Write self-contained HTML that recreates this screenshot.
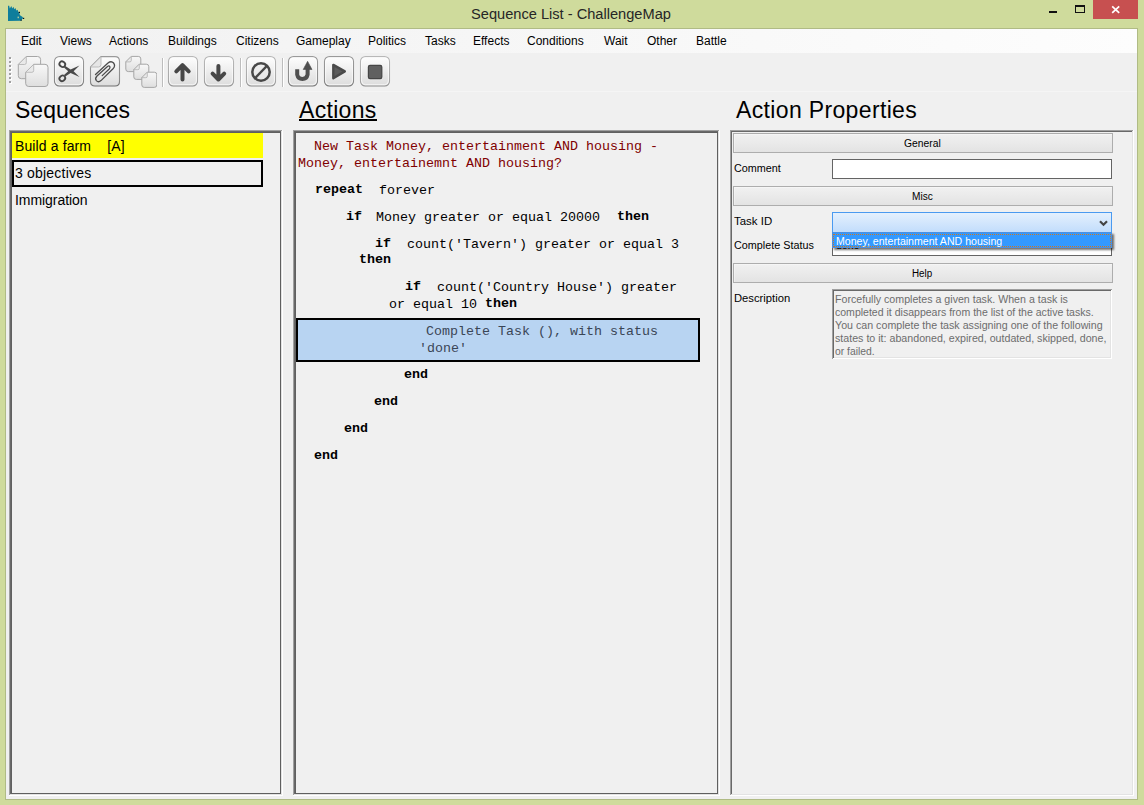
<!DOCTYPE html>
<html>
<head>
<meta charset="utf-8">
<title>Sequence List - ChallengeMap</title>
<style>
*{box-sizing:border-box;margin:0;padding:0}
html,body{width:1144px;height:805px;overflow:hidden}
body{background:#cfdb9c;font-family:"Liberation Sans",sans-serif;position:relative;color:#000}
.abs{position:absolute}
#frame{position:absolute;left:5px;top:28px;width:1133px;height:772px;background:#b0bb85}
#client{position:absolute;left:6px;top:29px;width:1131px;height:770px;background:#f0f0f0}
#title{position:absolute;left:0;top:0;width:1144px;height:28px}
#title .txt{position:absolute;left:471px;top:4px;font-size:15.4px;line-height:20px;transform-origin:0 0;transform:scaleX(.95);color:#262626;white-space:nowrap}
#close{position:absolute;left:1093px;top:0;width:45px;height:19px;background:#c75050}
#menubar{position:absolute;left:6px;top:29px;width:1131px;height:24px;background:linear-gradient(90deg,#f1f1f1 0%,#fdfdfd 100%)}
#menubar span{position:absolute;top:5px;font-size:12px;line-height:15px;white-space:nowrap;color:#000}
#toolbar{position:absolute;left:7px;top:53px;width:1129px;height:38px;background:#f0f0f0}
.h{position:absolute;font-size:23px;line-height:28px;white-space:nowrap;color:#000}

.mono{font-family:"Liberation Mono",monospace;font-size:13.33px;line-height:17px;white-space:pre;position:absolute;color:#000}
.mono b{font-weight:bold;position:relative;top:-1px}
.red{color:#800000}
.seq{position:absolute;font-size:14px;line-height:16px;white-space:pre;left:15px}
.p{position:absolute;margin-top:-1px;font-size:11.7px;line-height:13px;white-space:nowrap;transform-origin:0 0}
.btn{position:absolute;left:733px;width:380px;height:20px;border:1px solid #adadad;background:linear-gradient(#f1f1f1,#e3e3e3);box-shadow:inset 1px 1px 0 rgba(255,255,255,.35)}
.btn span{position:absolute;top:2px;font-size:11.7px;line-height:13px;white-space:nowrap;transform-origin:0 0}
.ln{position:absolute}
.d{color:#6d6d6d}
</style>
</head>
<body>
<div id="title">
  <svg class="abs" style="left:8px;top:5px" width="17" height="17" viewBox="0 0 17 17"><path d="M0 0.8 L1.2 0.8 L1.8 3.6 L3.3 1 L4.3 3.4 L5.4 1.8 L6.4 4.2 L7.5 2.9 L8.3 5.5 L9.6 4.7 L10.4 7 L11.6 7.6 L11.5 9 L12 10.3 L14.6 12 L15.2 13.6 L14 14 L13.6 15.8 L0 16 Z" fill="#0e7e9c"/><rect x="10.8" y="6.8" width="1.2" height="1.2" fill="#111"/><rect x="15" y="12.8" width="1.2" height="1.2" fill="#111"/><rect x="12.6" y="14.6" width="1" height="1.2" fill="#111"/><rect x="9.6" y="11.6" width="1.2" height="1.6" fill="#cfd89a"/></svg>
  <div class="txt">Sequence List - ChallengeMap</div>
  <div class="abs" style="left:1049px;top:11px;width:8px;height:2px;background:#111"></div>
  <div class="abs" style="left:1075px;top:5px;width:10px;height:8px;border:1px solid #111;border-top-width:2px"></div>
  <div id="close"><svg class="abs" style="left:18px;top:5px" width="10" height="9" viewBox="0 0 10 9"><path d="M1.2 1.3 L8.2 7.9 M8.2 1.3 L1.2 7.9" stroke="#fff" stroke-width="1.7" fill="none"/></svg></div>
</div>
<div id="frame"></div>
<div id="client"></div>
<div id="menubar">
  <span style="left:15px">Edit</span>
  <span style="left:54px">Views</span>
  <span style="left:103px">Actions</span>
  <span style="left:162px">Buildings</span>
  <span style="left:230px">Citizens</span>
  <span style="left:290px">Gameplay</span>
  <span style="left:362px">Politics</span>
  <span style="left:419px">Tasks</span>
  <span style="left:467px">Effects</span>
  <span style="left:521px">Conditions</span>
  <span style="left:598px">Wait</span>
  <span style="left:641px">Other</span>
  <span style="left:690px">Battle</span>
</div>
<div id="toolbar"></div><div class="ln" style="left:6px;top:91px;width:1131px;height:1px;background:#f5f5f5"></div>
<svg width="0" height="0" style="position:absolute"><defs>
<linearGradient id="bg" x1="0" y1="0" x2="0" y2="1"><stop offset="0" stop-color="#fefefe"/><stop offset="1" stop-color="#dcdcdc"/></linearGradient>
<linearGradient id="bs" x1="0" y1="0" x2="0" y2="1"><stop offset="0" stop-color="#b8b8b8"/><stop offset=".8" stop-color="#a8a8a8"/><stop offset="1" stop-color="#8a8a8a"/></linearGradient>
<linearGradient id="bs2" x1="0" y1="0" x2="0" y2="1"><stop offset="0" stop-color="#9a9a9a"/><stop offset=".8" stop-color="#8c8c8c"/><stop offset="1" stop-color="#6e6e6e"/></linearGradient>
<linearGradient id="pg" x1="0" y1="0" x2="0" y2="1"><stop offset="0" stop-color="#f8f8f8"/><stop offset="1" stop-color="#dedede"/></linearGradient>
</defs></svg><div class="ln" style="left:10px;top:58px;width:2px;height:2px;background:#fff"></div><div class="ln" style="left:9px;top:57px;width:2px;height:2px;background:#a0a0a0"></div><div class="ln" style="left:10px;top:62px;width:2px;height:2px;background:#fff"></div><div class="ln" style="left:9px;top:61px;width:2px;height:2px;background:#a0a0a0"></div><div class="ln" style="left:10px;top:66px;width:2px;height:2px;background:#fff"></div><div class="ln" style="left:9px;top:65px;width:2px;height:2px;background:#a0a0a0"></div><div class="ln" style="left:10px;top:70px;width:2px;height:2px;background:#fff"></div><div class="ln" style="left:9px;top:69px;width:2px;height:2px;background:#a0a0a0"></div><div class="ln" style="left:10px;top:74px;width:2px;height:2px;background:#fff"></div><div class="ln" style="left:9px;top:73px;width:2px;height:2px;background:#a0a0a0"></div><div class="ln" style="left:10px;top:78px;width:2px;height:2px;background:#fff"></div><div class="ln" style="left:9px;top:77px;width:2px;height:2px;background:#a0a0a0"></div><div class="ln" style="left:10px;top:82px;width:2px;height:2px;background:#fff"></div><div class="ln" style="left:9px;top:81px;width:2px;height:2px;background:#a0a0a0"></div><svg class="ln" style="left:17px;top:55px" width="32" height="33" viewBox="0 0 32 33"><path d="M9.3 1.5 H20.6 Q23.6 1.5 23.6 4.5 V20.7 Q23.6 23.7 20.6 23.7 H4.3 Q1.3 23.7 1.3 20.7 V9.5 Z" fill="url(#pg)" stroke="#a6a6a6" stroke-width="1"/><path d="M9.3 1.5 V7.7 Q9.3 9.5 7.500000000000001 9.5 H1.3 Z" fill="#e9e9e9" stroke="#b0b0b0" stroke-width=".8"/><path d="M16.7 9.3 H28.0 Q31.0 9.3 31.0 12.3 V28.5 Q31.0 31.5 28.0 31.5 H11.7 Q8.7 31.5 8.7 28.5 V17.3 Z" fill="url(#pg)" stroke="#a6a6a6" stroke-width="1"/><path d="M16.7 9.3 V15.5 Q16.7 17.3 14.899999999999999 17.3 H8.7 Z" fill="#e9e9e9" stroke="#b0b0b0" stroke-width=".8"/></svg>
<svg class="ln" style="left:53px;top:55px" width="32" height="33" viewBox="0 0 32 33"><rect x="1.5" y="1.6" width="29" height="29.4" rx="4.8" fill="url(#bg)" stroke="url(#bs2)" stroke-width="1.1"/><rect x="2.6" y="2.7" width="26.8" height="27" rx="3.8" fill="none" stroke="#fff" stroke-opacity=".7" stroke-width="1"/><g fill="none" stroke="#474747" stroke-width="1.8"><ellipse cx="9.3" cy="9.2" rx="3" ry="2.6" transform="rotate(35 9.3 9.2)"/><ellipse cx="9.3" cy="23.3" rx="3" ry="2.6" transform="rotate(-35 9.3 23.3)"/></g><path d="M12.3 11 L17.6 14.5 L26.5 10.4 L20.6 16.25 L26.5 21.9 L17.6 18 L12.3 21.5 L11 20 L15.2 16.25 L11 12.6 Z" fill="#4a4a4a"/></svg>
<svg class="ln" style="left:89px;top:55px" width="32" height="33" viewBox="0 0 32 33"><path d="M12 1.6 H26 Q30.5 1.6 30.5 6.2 V26.5 Q30.5 31 26 31 H6 Q1.5 31 1.5 26.5 V12 Z" fill="url(#bg)" stroke="url(#bs2)" stroke-width="1.1"/><path d="M12 1.6 V9.5 Q12 12 9.5 12 H1.5 Z" fill="#e6e6e6" stroke="#b0b0b0" stroke-width=".8"/><path d="M6.5 19.5 L19 8 Q22.2 5.4 24.6 8 Q26.8 10.8 24 13.8 L12 25.6 Q9.4 27.8 7.4 25.6 Q5.6 23.4 8 21 L18.5 11.5 Q20 10.4 20.8 11.6 Q21.4 12.8 20.2 14 L13.2 20.6" fill="none" stroke="#4c4c4c" stroke-width="1.3" stroke-linecap="round"/></svg>
<svg class="ln" style="left:125px;top:55px" width="32" height="33" viewBox="0 0 32 33"><path d="M6.3 1.4 H13.3 Q15.8 1.4 15.8 3.9 V14.099999999999998 Q15.8 16.599999999999998 13.3 16.599999999999998 H3.3 Q0.8 16.599999999999998 0.8 14.099999999999998 V6.9 Z" fill="url(#pg)" stroke="#a6a6a6" stroke-width="1"/><path d="M6.3 1.4 V5.4 Q6.3 6.9 4.8 6.9 H0.8 Z" fill="#e9e9e9" stroke="#b0b0b0" stroke-width=".8"/><path d="M14.3 9.2 H21.3 Q23.8 9.2 23.8 11.7 V21.9 Q23.8 24.4 21.3 24.4 H11.3 Q8.8 24.4 8.8 21.9 V14.7 Z" fill="url(#pg)" stroke="#a6a6a6" stroke-width="1"/><path d="M14.3 9.2 V13.2 Q14.3 14.7 12.8 14.7 H8.8 Z" fill="#e9e9e9" stroke="#b0b0b0" stroke-width=".8"/><path d="M22.3 17.2 H29.3 Q31.8 17.2 31.8 19.7 V29.9 Q31.8 32.4 29.3 32.4 H19.3 Q16.8 32.4 16.8 29.9 V22.7 Z" fill="url(#pg)" stroke="#a6a6a6" stroke-width="1"/><path d="M22.3 17.2 V21.2 Q22.3 22.7 20.8 22.7 H16.8 Z" fill="#e9e9e9" stroke="#b0b0b0" stroke-width=".8"/></svg>
<svg class="ln" style="left:167px;top:55px" width="32" height="33" viewBox="0 0 32 33"><rect x="1.5" y="1.6" width="29" height="29.4" rx="4.8" fill="url(#bg)" stroke="url(#bs)" stroke-width="1.1"/><rect x="2.6" y="2.7" width="26.8" height="27" rx="3.8" fill="none" stroke="#fff" stroke-opacity=".7" stroke-width="1"/><path d="M15.5 24.4 V10.2 M9.3 16.4 L15.5 10.2 L21.7 16.4" fill="none" stroke="#474747" stroke-width="4" stroke-linecap="round" stroke-linejoin="round"/></svg>
<svg class="ln" style="left:203px;top:55px" width="32" height="33" viewBox="0 0 32 33"><rect x="1.5" y="1.6" width="29" height="29.4" rx="4.8" fill="url(#bg)" stroke="url(#bs)" stroke-width="1.1"/><rect x="2.6" y="2.7" width="26.8" height="27" rx="3.8" fill="none" stroke="#fff" stroke-opacity=".7" stroke-width="1"/><path d="M15.4 11.1 V24.5 M9.6 18.6 L15.4 24.5 L21.2 18.6" fill="none" stroke="#474747" stroke-width="4" stroke-linecap="round" stroke-linejoin="round"/></svg>
<svg class="ln" style="left:245px;top:55px" width="32" height="33" viewBox="0 0 32 33"><rect x="1.5" y="1.6" width="29" height="29.4" rx="4.8" fill="url(#bg)" stroke="url(#bs)" stroke-width="1.1"/><rect x="2.6" y="2.7" width="26.8" height="27" rx="3.8" fill="none" stroke="#fff" stroke-opacity=".7" stroke-width="1"/><circle cx="16" cy="17" r="8.7" fill="#eaeaea" fill-opacity=".6" stroke="#474747" stroke-width="2.5"/><path d="M10.2 23 L21.8 11" stroke="#474747" stroke-width="2.5"/></svg>
<svg class="ln" style="left:287px;top:55px" width="32" height="33" viewBox="0 0 32 33"><rect x="1.5" y="1.6" width="29" height="29.4" rx="4.8" fill="url(#bg)" stroke="url(#bs2)" stroke-width="1.1"/><rect x="2.6" y="2.7" width="26.8" height="27" rx="3.8" fill="none" stroke="#fff" stroke-opacity=".7" stroke-width="1"/><path d="M10.2 14.3 V19.6 A5.3 5.3 0 0 0 20.6 19.6 V13" fill="none" stroke="#4f4f4f" stroke-width="4"/><path d="M20.6 6.3 L25 14.5 H16.2 Z" fill="#4f4f4f" stroke="#4f4f4f" stroke-width=".6" stroke-linejoin="round"/></svg>
<svg class="ln" style="left:323px;top:55px" width="32" height="33" viewBox="0 0 32 33"><rect x="1.5" y="1.6" width="29" height="29.4" rx="4.8" fill="url(#bg)" stroke="url(#bs2)" stroke-width="1.1"/><rect x="2.6" y="2.7" width="26.8" height="27" rx="3.8" fill="none" stroke="#fff" stroke-opacity=".7" stroke-width="1"/><path d="M10.3 9.9 V23.3 L21.8 16.4 Z" fill="#5c5c5c" stroke="#4a4a4a" stroke-width="2.4" stroke-linejoin="round"/></svg>
<svg class="ln" style="left:359px;top:55px" width="32" height="33" viewBox="0 0 32 33"><rect x="1.5" y="1.6" width="29" height="29.4" rx="4.8" fill="url(#bg)" stroke="url(#bs)" stroke-width="1.1"/><rect x="2.6" y="2.7" width="26.8" height="27" rx="3.8" fill="none" stroke="#fff" stroke-opacity=".7" stroke-width="1"/><rect x="9.4" y="10.4" width="13.4" height="13.2" rx="1.6" fill="#606060" stroke="#454545" stroke-width="1.2"/></svg>
<div class="ln" style="left:162px;top:58px;width:1px;height:29px;background:#bdbdbd"></div><div class="ln" style="left:163px;top:58px;width:1px;height:29px;background:#fff"></div><div class="ln" style="left:240px;top:58px;width:1px;height:29px;background:#bdbdbd"></div><div class="ln" style="left:241px;top:58px;width:1px;height:29px;background:#fff"></div><div class="ln" style="left:282px;top:58px;width:1px;height:29px;background:#bdbdbd"></div><div class="ln" style="left:283px;top:58px;width:1px;height:29px;background:#fff"></div>
<div class="h" style="left:15px;top:96px">Sequences</div>
<div class="h" style="left:299px;top:96px;letter-spacing:.3px">Actions</div><div class="ln" style="left:299px;top:119px;width:78px;height:2px;background:#000"></div>
<div class="h" style="left:736px;top:96px;letter-spacing:.35px">Action Properties</div>

<!-- panel 1 : sequences -->
<div class="ln" style="left:9px;top:130px;width:274px;height:666px;background:#fff"></div>
<div class="ln" style="left:9px;top:130px;width:273px;height:665px;background:#a0a0a0"></div>
<div class="ln" style="left:10px;top:131px;width:272px;height:664px;background:#e3e3e3"></div>
<div class="ln" style="left:10px;top:131px;width:271px;height:663px;background:#696969"></div>
<div class="ln" style="left:11px;top:132px;width:270px;height:662px;background:#606060"></div>
<div class="ln" style="left:12px;top:133px;width:268px;height:660px;background:#f0f0f0"></div>
<div class="ln" style="left:12px;top:133px;width:251px;height:25px;background:#ffff00"></div>
<div class="ln" style="left:12px;top:160px;width:251px;height:27px;border:2px solid #000"></div>
<div class="seq" style="top:138px;letter-spacing:.12px">Build a farm    [A]</div>
<div class="seq" style="top:165px;letter-spacing:.2px">3 objectives</div>
<div class="seq" style="top:192px;letter-spacing:-.05px">Immigration</div>

<!-- panel 2 : actions -->
<div class="ln" style="left:293px;top:130px;width:427px;height:666px;background:#fff"></div>
<div class="ln" style="left:293px;top:130px;width:426px;height:665px;background:#a0a0a0"></div>
<div class="ln" style="left:294px;top:131px;width:425px;height:664px;background:#e3e3e3"></div>
<div class="ln" style="left:294px;top:131px;width:424px;height:663px;background:#696969"></div>
<div class="ln" style="left:295px;top:132px;width:423px;height:662px;background:#606060"></div>
<div class="ln" style="left:296px;top:133px;width:421px;height:660px;background:#f0f0f0"></div>
<div class="ln" style="left:296px;top:318px;width:404px;height:44px;border:2px solid #000;background:#b8d4f2"></div>
<div class="mono red" style="left:298px;top:138px">  New Task Money, entertainment AND housing -
Money, entertainemnt AND housing?</div>
<div class="mono" style="left:315px;top:182px"><b>repeat</b>  forever</div>
<div class="mono" style="left:346px;top:209px"><b>if</b></div>
<div class="mono" style="left:376px;top:209px">Money greater or equal 20000</div>
<div class="mono" style="left:617px;top:209px"><b>then</b></div>
<div class="mono" style="left:375px;top:236px"><b>if</b></div>
<div class="mono" style="left:407px;top:236px">count('Tavern') greater or equal 3</div>
<div class="mono" style="left:359px;top:252px"><b>then</b></div>
<div class="mono" style="left:405px;top:279px"><b>if</b></div>
<div class="mono" style="left:437px;top:279px">count('Country House') greater</div>
<div class="mono" style="left:389px;top:296px">or equal 10</div>
<div class="mono" style="left:485px;top:296px"><b>then</b></div>
<div class="mono" style="left:426px;top:323px;color:#3a4656">Complete Task (), with status</div>
<div class="mono" style="left:419px;top:340px;color:#3a4656">'done'</div>
<div class="mono" style="left:404px;top:367px"><b>end</b></div>
<div class="mono" style="left:374px;top:394px"><b>end</b></div>
<div class="mono" style="left:344px;top:421px"><b>end</b></div>
<div class="mono" style="left:314px;top:448px"><b>end</b></div>

<!-- panel 3 : properties -->
<div class="ln" style="left:730px;top:130px;width:404px;height:666px;background:#fff"></div>
<div class="ln" style="left:730px;top:130px;width:403px;height:665px;background:#a0a0a0"></div>
<div class="ln" style="left:731px;top:131px;width:402px;height:664px;background:#e3e3e3"></div>
<div class="ln" style="left:731px;top:131px;width:401px;height:663px;background:#696969"></div>
<div class="ln" style="left:732px;top:132px;width:400px;height:662px;background:#f0f0f0"></div>
<div class="btn" style="top:133px"><span style="left:170px;transform:scaleX(.882)">General</span></div>
<div class="p" style="left:734px;top:162px;transform:scaleX(0.9245)">Comment</div>
<div class="ln" style="left:832px;top:159px;width:280px;height:20px;background:#fff;border:1px solid #646464"></div>
<div class="btn" style="top:186px"><span style="left:178px;transform:scaleX(.865)">Misc</span></div>
<div class="p" style="left:734px;top:215px;transform:scaleX(0.979)">Task ID</div>
<div class="p" style="left:734px;top:239px;transform:scaleX(0.924)">Complete Status</div>
<div class="ln" style="left:832px;top:236px;width:280px;height:20px;background:#fff;border:1px solid #646464"><span class="p" style="left:3px;top:2px;transform:scaleX(0.9)">done</span></div>
<div class="ln" style="left:832px;top:212px;width:280px;height:21px;border:1px solid #4a9af0;background:linear-gradient(#e4f0fd,#c2ddfc)"><svg class="ln" style="left:266px;top:7px" width="9" height="7" viewBox="0 0 9 7"><path d="M1 1.2 L4.5 4.7 L8 1.2" stroke="#444" stroke-width="2.2" fill="none"/></svg></div>
<div class="ln" style="left:832px;top:232px;width:280px;height:16px;background:#3399ff;border:1px solid #4a90e2;box-shadow:2px 2px 2px rgba(0,0,0,.55)"><div class="ln" style="left:0;top:1px;width:278px;height:13px;border:1px dotted #d07820"></div><span class="p" style="left:3px;top:2px;color:#fff;transform:scaleX(0.905)">Money, entertainment AND housing</span></div>
<div class="btn" style="top:263px"><span style="left:178px;transform:scaleX(.84)">Help</span></div>
<div class="p" style="left:734px;top:292px;transform:scaleX(0.961)">Description</div>
<div class="ln" style="left:832px;top:289px;width:280px;height:70px;background:#a0a0a0"></div>
<div class="ln" style="left:833px;top:290px;width:279px;height:69px;background:#fff"></div>
<div class="ln" style="left:833px;top:290px;width:278px;height:68px;background:#696969"></div>
<div class="ln" style="left:834px;top:291px;width:277px;height:67px;background:#e3e3e3"></div>
<div class="ln" style="left:834px;top:291px;width:276px;height:66px;background:#f0f0f0"></div>
<div class="p d" style="left:835px;top:293px;transform:scaleX(0.91)">Forcefully completes a given task. When a task is</div>
<div class="p d" style="left:835px;top:306px;transform:scaleX(0.901)">completed it disappears from the list of the active tasks.</div>
<div class="p d" style="left:835px;top:319px;transform:scaleX(0.9125)">You can complete the task assigning one of the following</div>
<div class="p d" style="left:835px;top:332px;transform:scaleX(0.912)">states to it: abandoned, expired, outdated, skipped, done,</div>
<div class="p d" style="left:835px;top:345px;transform:scaleX(0.886)">or failed.</div>


</body>
</html>
